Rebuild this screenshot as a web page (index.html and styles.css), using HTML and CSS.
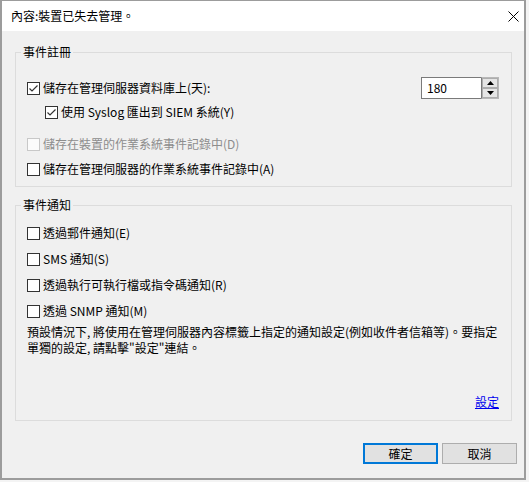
FILE: index.html
```html
<!DOCTYPE html>
<html lang="zh-Hant">
<head>
<meta charset="utf-8">
<title>內容</title>
<link rel="stylesheet" href="styles.css">
</head>
<body>
<div class="window">
  <div class="titlebar">
    <span class="title">內容:裝置已失去管理。</span>
    <svg class="close" width="11" height="11" viewBox="0 0 11 11"><path d="M0.5 0.5 L10.5 10.5 M10.5 0.5 L0.5 10.5" stroke="#000" stroke-width="1" fill="none"/></svg>
  </div>
  <div class="content">
    <fieldset class="group">
      <legend>事件註冊</legend>
      <div class="group-inner g1">
        <div class="row row-spread">
          <label class="cb"><span class="box checked"><svg width="11" height="11" viewBox="0 0 11 11"><path d="M1.5 5.5 L4 8 L9.5 2.5" stroke="#333" stroke-width="1.2" fill="none"/></svg></span>儲存在管理伺服器資料庫上(天):</label>
          <div class="spin">
            <div class="spin-input">180</div>
            <div class="spin-btns">
              <span class="spin-btn"><svg width="7" height="4" viewBox="0 0 7 4"><path d="M0 4 L3.5 0 L7 4 Z" fill="#000"/></svg></span>
              <span class="spin-btn"><svg width="7" height="4" viewBox="0 0 7 4"><path d="M0 0 L3.5 4 L7 0 Z" fill="#000"/></svg></span>
            </div>
          </div>
        </div>
        <div class="row row-2 indent">
          <label class="cb"><span class="box checked"><svg width="11" height="11" viewBox="0 0 11 11"><path d="M1.5 5.5 L4 8 L9.5 2.5" stroke="#333" stroke-width="1.2" fill="none"/></svg></span>使用 Syslog 匯出到 SIEM 系統(Y)</label>
        </div>
        <div class="row row-3">
          <label class="cb disabled"><span class="box"></span>儲存在裝置的作業系統事件記錄中(D)</label>
        </div>
        <div class="row row-4">
          <label class="cb"><span class="box"></span>儲存在管理伺服器的作業系統事件記錄中(A)</label>
        </div>
      </div>
    </fieldset>

    <fieldset class="group group2">
      <legend>事件通知</legend>
      <div class="group-inner g2">
        <div class="row first">
          <label class="cb"><span class="box"></span>透過郵件通知(E)</label>
        </div>
        <div class="row next">
          <label class="cb"><span class="box"></span>SMS 通知(S)</label>
        </div>
        <div class="row next">
          <label class="cb"><span class="box"></span>透過執行可執行檔或指令碼通知(R)</label>
        </div>
        <div class="row next">
          <label class="cb"><span class="box"></span>透過 SNMP 通知(M)</label>
        </div>
        <p class="note"><span class="note-line">預設情況下, 將使用在管理伺服器內容標籤上指定的通知設定(例如收件者信箱等)。要指定</span><span class="note-line">單獨的設定, 請點擊"設定"連結。</span></p>
        <div class="link-row"><a class="link" href="#">設定</a></div>
      </div>
    </fieldset>

    <div class="buttons">
      <button class="btn primary">確定</button>
      <button class="btn">取消</button>
    </div>
  </div>
</div>
</body>
</html>
```

FILE: styles.css
```css
* { box-sizing: border-box; }
html, body { margin: 0; padding: 0; }
body {
  background: #f4f4f4;
  font-family: "Noto Sans CJK TC", "Noto Sans", sans-serif;
  font-size: 12px;
  color: #000;
}
.window {
  width: 526px;
  height: 480px;
  background: #f0f0f0;
  border-style: solid;
  border-color: #9c9c9c;
  border-width: 1px 2px 2px 2px;
  display: flex;
  flex-direction: column;
}
.titlebar {
  height: 30px;
  background: #fff;
  display: flex;
  align-items: center;
  justify-content: space-between;
  padding: 0 5px 0 9px;
}
.title { line-height: 16px; }
.close { display: block; margin-top: 0; }
.content {
  padding: 13px 12px 0 13px;
}
.group {
  margin: 0;
  padding: 0;
  border: 1px solid #dcdcdc;
  min-width: 0;
}
.group legend {
  margin-left: 5px;
  padding: 0 2px;
  line-height: 16px;
}
.group2 { margin-top: 10px; }
.group-inner { padding: 0 12px 0 11px; }
.g1 { padding-top: 17px; padding-bottom: 6px; }
.g2 { padding-top: 9px; padding-bottom: 10px; }
.row {
  height: 22px;
  display: flex;
  align-items: center;
}
.row-spread { justify-content: space-between; }
.row-2 { margin-top: 2px; }
.row-3 { margin-top: 10px; }
.row-4 { margin-top: 3px; }
.indent { padding-left: 18px; }
.next { margin-top: 4px; }
.cb {
  display: flex;
  align-items: center;
  line-height: 16px;
  white-space: nowrap;
}
.box {
  width: 13px;
  height: 13px;
  border: 1px solid #333;
  background: #fff;
  margin-right: 3px;
  display: flex;
  align-items: center;
  justify-content: center;
  flex: none;
}
.box svg { display: block; }
.cb.disabled { color: #8d8d8d; }
.cb.disabled .box { border-color: #c8c8c8; background: #fbfbfb; }
.spin {
  display: flex;
  width: 78px;
  height: 22px;
}
.spin-input {
  width: 60px;
  height: 22px;
  background: #fff;
  border: 1px solid #7a7a7a;
  border-right: none;
  padding-left: 5px;
  line-height: 20px;
}
.spin-btns {
  width: 18px;
  height: 22px;
  display: flex;
  flex-direction: column;
  border: 1px solid #b8b8b8;
  border-left: 1px solid #7a7a7a;
  background: #fff;
}
.spin-btn {
  flex: 1;
  display: flex;
  align-items: center;
  justify-content: center;
  background: #e5e5e5;
  border: 1px solid #adadad;
  margin: 0;
}
.spin-btn svg { display: block; }
.note {
  margin: 2px 0 0 0;
  white-space: nowrap;
}
.note-line {
  display: block;
  height: 16px;
  line-height: 16px;
}
.link-row {
  margin-top: 38px;
  display: flex;
  justify-content: flex-end;
  line-height: 16px;
}
.link { color: #0000ee; text-decoration: underline; }
.buttons {
  margin-top: 22px;
  margin-right: -5px;
  display: flex;
  justify-content: flex-end;
  gap: 4px;
}
.btn {
  width: 75px;
  height: 21px;
  margin: 0;
  padding: 0;
  font-family: inherit;
  font-size: 12px;
  color: #000;
  background: #e1e1e1;
  border: 1px solid #adadad;
  line-height: 16px;
}
.btn.primary { border: 2px solid #0078d7; }
```
